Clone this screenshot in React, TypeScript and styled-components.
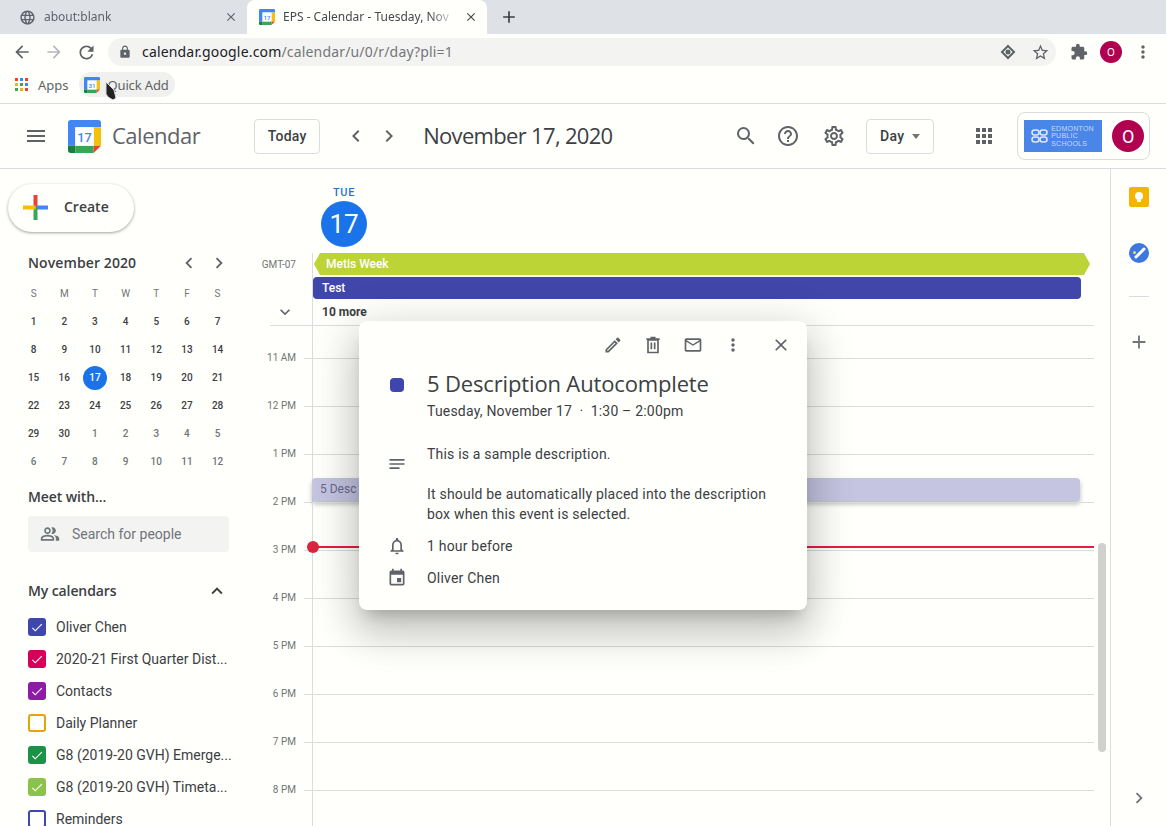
import React from 'react';
import styled, { createGlobalStyle } from 'styled-components';
import {
  MdAdd, MdApps, MdArrowBack, MdArrowForward, MdChevronLeft, MdChevronRight, MdClose, MdEvent, MdExpandLess,
  MdExpandMore, MdExtension, MdHelpOutline, MdLanguage, MdLock, MdMenu, MdMoreVert, MdNotes,
  MdOutlineEdit, MdOutlineMail, MdOutlineNotifications, MdOutlinePeopleAlt, MdOutlineSettings, MdRefresh,
  MdSearch, MdStarBorder, MdCheck,
} from 'react-icons/md';

const UI = '"Noto Sans", "Open Sans", sans-serif';
const BODY = 'Roboto, "Liberation Sans", sans-serif';
const BRAND = '"Open Sans", Roboto, sans-serif';

const GlobalStyle = createGlobalStyle`
  html, body { margin: 0; padding: 0; background: #fffffc; }
  * { box-sizing: border-box; }
`;

const Page = styled.div`
  position: relative;
  width: 1166px;
  height: 826px;
  overflow: hidden;
  display: flex;
  flex-direction: column;
  background: #fffffc;
  font-family: ${BODY};
  color: #3c4043;
`;

const TabStrip = styled.div`
  height: 34px;
  flex: none;
  display: flex;
  align-items: flex-end;
  padding-left: 7px;
  background: #dee1e6;
`;

const Tab = styled.div<{ $active?: boolean }>`
  width: 240px;
  height: 34px;
  display: flex;
  align-items: center;
  padding: 0 9px 0 12px;
  gap: 8px;
  border-radius: 8px 8px 0 0;
  background: ${(p) => (p.$active ? '#fffffc' : 'transparent')};
  color: ${(p) => (p.$active ? '#45484c' : '#5f6368')};
  font: 12px/16px ${UI};
`;

const TabTitle = styled.span`
  flex: 1;
  white-space: nowrap;
  overflow: hidden;
  -webkit-mask-image: linear-gradient(to right, #000 85%, transparent);
  mask-image: linear-gradient(to right, #000 85%, transparent);
`;

const NewTab = styled.div`
  display: flex;
  align-items: center;
  height: 34px;
  padding-left: 12px;
  color: #3c4043;
`;

const BrowserBar = styled.div`
  height: 36px;
  flex: none;
  display: flex;
  align-items: center;
  padding-left: 6px;
  background: #fffffc;
  color: #5f6368;
`;

const NavButton = styled.div<{ $muted?: boolean }>`
  width: 32px;
  height: 32px;
  flex: none;
  display: flex;
  align-items: center;
  justify-content: center;
  color: ${(p) => (p.$muted ? '#b6b8ba' : '#5f6368')};
`;

const Omnibox = styled.div`
  width: 948px;
  height: 28px;
  margin: 0 7px 0 6px;
  flex: none;
  display: flex;
  align-items: center;
  padding: 0 0 0 10px;
  border-radius: 14px;
  background: #f3f3f2;
  font: 14px/20px ${UI};
`;

const Url = styled.span`
  flex: 1;
  margin-left: 10px;
  color: #73767a;
  letter-spacing: 0.17px;
  b { font-weight: 400; color: #202124; }
`;

const ProfileDot = styled.div`
  width: 22px;
  height: 22px;
  border-radius: 50%;
  display: flex;
  align-items: center;
  justify-content: center;
  background: #b0004f;
  color: #fff;
  font: 10px ${UI};
`;

const Bookmarks = styled.div`
  height: 34px;
  flex: none;
  display: flex;
  align-items: center;
  padding: 0 0 4px 15px;
  border-bottom: 1px solid #dadce0;
  font: 13px/16px ${UI};
  color: #5f6368;
`;

const AppsLabel = styled.span`
  margin: 0 10px 0 10px;
`;

const QuickAdd = styled.div`
  width: 96px;
  height: 25px;
  display: flex;
  align-items: center;
  gap: 8px;
  padding-left: 5px;
  border-radius: 13px;
  background: #f0f0ee;
  letter-spacing: -0.15px;
`;

const AppHeader = styled.header`
  height: 65px;
  flex: none;
  display: flex;
  align-items: center;
  padding-left: 24px;
  border-bottom: 1px solid #dadce0;
  color: #5f6368;
`;

const Wordmark = styled.span`
  margin: -2px 54px 0 11px;
  font: 22px/28px ${BRAND};
  letter-spacing: -0.5px;
  color: #5f6368;
`;

const OutlineButton = styled.div<{ $width: number }>`
  width: ${(p) => p.$width}px;
  height: 35px;
  flex: none;
  display: flex;
  align-items: center;
  justify-content: center;
  gap: 8px;
  border: 1px solid #dadce0;
  border-radius: 4px;
  font: 500 14px/20px ${BODY};
  letter-spacing: 0.25px;
  color: #3c4043;
`;

const Caret = styled.i`
  width: 0;
  height: 0;
  border: 4.5px solid transparent;
  border-top: 5px solid #70757a;
  border-bottom: 0;
`;

const HeaderIcon = styled.div<{ $w?: number }>`
  width: ${(p) => p.$w ?? 33}px;
  height: 33px;
  flex: none;
  display: flex;
  align-items: center;
  justify-content: center;
  color: #5f6368;
`;

const DateTitle = styled.h1`
  width: 311px;
  margin: -3px 0 0 18px;
  font: 400 22px/28px ${BRAND};
  letter-spacing: -0.68px;
  color: #3c4043;
`;

const Account = styled.div`
  width: 133px;
  height: 48px;
  margin-left: 21px;
  flex: none;
  display: flex;
  align-items: center;
  padding-left: 6px;
  gap: 10px;
  border: 1px solid #dadce0;
  border-radius: 8px;
`;

const SchoolLogo = styled.div`
  width: 78px;
  height: 32px;
  display: flex;
  align-items: center;
  gap: 3px;
  padding-left: 7px;
  background: #4a86e8;
  color: #c6d9f8;
  font: 300 7px/7.5px "Liberation Sans", sans-serif;
  letter-spacing: 0.25px;
  text-transform: uppercase;
`;

const Avatar = styled.div`
  width: 32px;
  height: 32px;
  display: flex;
  align-items: center;
  justify-content: center;
  border-radius: 50%;
  background: #b0004f;
  color: #fff;
  font: 18px ${BODY};
`;

const Body = styled.main`
  flex: 1;
  min-height: 0;
  display: flex;
`;

const Sidebar = styled.aside`
  width: 256px;
  flex: none;
  display: flex;
  flex-direction: column;
`;

const CreateButton = styled.div`
  width: 126px;
  height: 48px;
  margin: 15px 0 0 8px;
  padding: 0 0 2px 15px;
  flex: none;
  display: flex;
  align-items: center;
  gap: 16px;
  border-radius: 24px;
  background: #fffffc;
  box-shadow: 0 1px 2px 0 rgba(60, 64, 67, 0.3), 0 1px 3px 1px rgba(60, 64, 67, 0.15);
  font: 600 14px/20px ${BRAND};
  color: #3c4043;
`;

const MiniHeader = styled.div`
  height: 28px;
  margin: 17px 22px 0 28px;
  flex: none;
  display: flex;
  align-items: center;
  color: #5f6368;
`;

const MiniTitle = styled.span`
  flex: 1;
  font: 600 14px/20px ${BRAND};
  letter-spacing: 0.1px;
  color: #3c4043;
`;

const MiniGrid = styled.div`
  margin: 3px 0 0 18.3px;
  flex: none;
  display: grid;
  grid-template-columns: repeat(7, 30.67px);
  grid-auto-rows: 28px;
`;

const MiniCell = styled.div<{ $tone: 'head' | 'day' | 'other' | 'today' }>`
  display: flex;
  align-items: center;
  justify-content: center;
  font: ${(p) => (p.$tone === 'head' ? 400 : 500)} 10px/16px ${BODY};
  color: ${(p) => ({ head: '#70757a', day: '#3c4043', other: '#70757a', today: '#fff' })[p.$tone]};
  span {
    width: 24px;
    height: 24px;
    display: flex;
    align-items: center;
    justify-content: center;
    border-radius: 50%;
    background: ${(p) => (p.$tone === 'today' ? '#1a73e8' : 'transparent')};
  }
`;

const SectionTitle = styled.div<{ $top: number }>`
  height: 20px;
  margin: ${(p) => p.$top}px 28px 0 28px;
  flex: none;
  display: flex;
  align-items: center;
  justify-content: space-between;
  font: 600 14px/20px ${BRAND};
  letter-spacing: -0.1px;
  color: #3c4043;
`;

const PeopleSearch = styled.div`
  width: 201px;
  height: 36px;
  margin: 9px 0 0 28px;
  flex: none;
  display: flex;
  align-items: center;
  gap: 12px;
  padding-left: 12px;
  border-radius: 4px;
  background: #f3f3f2;
  font: 14px/20px ${BODY};
  color: #70757a;
`;

const CalendarList = styled.ul`
  margin: 10px 0 0 28px;
  padding: 0;
  list-style: none;
`;

const CalendarRow = styled.li`
  height: 32px;
  width: 204px;
  display: flex;
  align-items: center;
  gap: 10px;
  font: 14px/20px ${BODY};
  color: #3c4043;
  white-space: nowrap;
`;

const Check = styled.span<{ $color: string; $on: boolean }>`
  width: 18px;
  height: 18px;
  flex: none;
  display: flex;
  align-items: center;
  justify-content: center;
  border: 2px solid ${(p) => p.$color};
  border-radius: 3px;
  background: ${(p) => (p.$on ? p.$color : 'transparent')};
  color: #fff;
`;

const Schedule = styled.section`
  flex: 1;
  min-width: 0;
  display: flex;
  flex-direction: column;
  position: relative;
`;

const DayHead = styled.div`
  width: 46px;
  height: 84px;
  margin-left: 65px;
  padding-top: 17px;
  flex: none;
  display: flex;
  flex-direction: column;
  align-items: center;
  gap: 1px;
  font: 500 11px/14px ${BODY};
  letter-spacing: 0.6px;
  color: #2a6fd6;
`;

const DayNumber = styled.div`
  width: 46px;
  height: 46px;
  display: flex;
  align-items: center;
  justify-content: center;
  border-radius: 50%;
  background: #1a73e8;
  color: #fff;
  letter-spacing: 0;
  font: 400 26px/46px ${BODY};
`;

const AllDay = styled.div`
  height: 73px;
  margin: 0 16px 0 14px;
  flex: none;
  display: flex;
  border-bottom: 1px solid #dadce0;
`;

const AllDayGutter = styled.div`
  width: 42px;
  flex: none;
  display: flex;
  flex-direction: column;
  justify-content: space-between;
  align-items: flex-end;
  padding: 5px 16px 3px 0;
  color: #5f6368;
  font: 10px/14px ${BODY};
  white-space: nowrap;
  svg { margin-right: 1px; }
`;

const GutterLabel = styled.span`
  color: #70757a;
`;

const AllDayEvents = styled.div`
  flex: 1;
  display: flex;
  flex-direction: column;
  gap: 2px;
  border-left: 1px solid #dadce0;
`;

const Banner = styled.div<{ $color: string; $width: number; $pointed?: boolean }>`
  width: ${(p) => p.$width}px;
  height: 22px;
  margin-left: ${(p) => (p.$pointed ? 1 : 0)}px;
  padding-left: ${(p) => (p.$pointed ? 12 : 9)}px;
  border-radius: ${(p) => (p.$pointed ? 0 : 4)}px;
  background: ${(p) => p.$color};
  clip-path: ${(p) =>
    p.$pointed
      ? 'polygon(0 50%, 6px 0, calc(100% - 6px) 0, 100% 50%, calc(100% - 6px) 100%, 6px 100%)'
      : 'none'};
  color: #fff;
  font: 500 12px/22px ${BODY};
`;

const MoreLink = styled.div`
  height: 22px;
  padding-left: 9px;
  font: 700 12px/22px ${BODY};
  color: #3c4043;
`;

const HourRow = styled.div<{ $height: number }>`
  height: ${(p) => p.$height}px;
  flex: none;
  display: flex;
`;

const HourLabel = styled.div`
  width: 40px;
  flex: none;
  margin-top: -7px;
  text-align: right;
  font: 10px/14px ${BODY};
  color: #70757a;
  white-space: nowrap;
`;

const Tick = styled.div<{ $line: boolean }>`
  width: 8px;
  margin-left: 8px;
  flex: none;
  border-top: ${(p) => (p.$line ? '1px solid #dadce0' : '0')};
`;

const HourCell = styled.div<{ $line: boolean }>`
  position: relative;
  flex: 1;
  margin-right: 16px;
  border-left: 1px solid #dadce0;
  border-top: ${(p) => (p.$line ? '1px solid #dadce0' : '0')};
`;

const GridEvent = styled.div`
  position: absolute;
  left: -1px;
  right: 14px;
  top: 23px;
  height: 23px;
  padding-left: 8px;
  border-radius: 4px;
  background: #c5c4e1;
  box-shadow: 0 3px 5px rgba(0, 0, 0, 0.28);
  color: #666a8c;
  font: 400 12px/23px ${BODY};
`;

const NowLine = styled.div`
  position: absolute;
  left: 0;
  right: 0;
  top: -5px;
  height: 2px;
  background: #d9263c;
  &::before {
    content: '';
    position: absolute;
    left: -6px;
    top: -5px;
    width: 12px;
    height: 12px;
    border-radius: 50%;
    background: #d9263c;
  }
`;

const ScrollThumb = styled.div`
  position: absolute;
  left: 842px;
  top: 374px;
  width: 8px;
  height: 209px;
  border-radius: 4px;
  background: #d0d0ce;
`;

const SidePanel = styled.aside`
  width: 56px;
  flex: none;
  display: flex;
  flex-direction: column;
  align-items: center;
  border-left: 1px solid #dadce0;
  color: #70757a;
`;

const PanelIcon = styled.div<{ $top: number }>`
  margin-top: ${(p) => p.$top}px;
  height: 20px;
  display: flex;
  align-items: center;
  justify-content: center;
`;

const PanelRule = styled.hr`
  width: 20px;
  margin: 33px 0 0;
  border: 0;
  border-top: 1px solid #dadce0;
`;

const Popup = styled.div`
  position: absolute;
  left: 359px;
  top: 321px;
  width: 448px;
  height: 289px;
  border-radius: 8px;
  background: #fffffc;
  box-shadow: 0 24px 38px 3px rgba(0, 0, 0, 0.14), 0 9px 46px 8px rgba(0, 0, 0, 0.12),
    0 11px 15px -7px rgba(0, 0, 0, 0.2);
`;

const PopupTools = styled.div`
  height: 48px;
  padding-right: 6px;
  display: flex;
  justify-content: flex-end;
  align-items: center;
  color: #5f6368;
`;

const ToolButton = styled.div<{ $gap?: boolean }>`
  width: 40px;
  height: 40px;
  margin-left: ${(p) => (p.$gap ? 8 : 0)}px;
  display: flex;
  align-items: center;
  justify-content: center;
`;

const PopupRow = styled.div<{ $top?: number }>`
  margin-top: ${(p) => p.$top ?? 0}px;
  display: grid;
  grid-template-columns: 68px 1fr;
  padding-right: 30px;
  font: 14px/20px ${BODY};
  letter-spacing: 0.2px;
  color: #3c4043;
`;

const RowIcon = styled.div<{ $top: number }>`
  padding: ${(p) => p.$top}px 0 0 28px;
  color: #5f6368;
  svg { display: block; }
`;

const Swatch = styled.div`
  width: 14px;
  height: 14px;
  margin: 8px 0 0 31px;
  border-radius: 4px;
  background: #3f46ad;
`;

const EventTitle = styled.div`
  margin-top: -1px;
  font: 400 22px/28px ${BRAND};
  letter-spacing: -0.15px;
`;

const EventWhen = styled.div`
  margin-top: 4px;
`;

const Paragraph = styled.p`
  margin: 0 0 20px;
  &:last-child { margin: 0; }
`;

const PointerMark = styled.svg`
  position: absolute;
  left: 104px;
  top: 80px;
`;

function CalendarLogo({ size, day }: { size: number; day: string }) {
  return (
    <svg width={size} height={size} viewBox="0 0 36 36">
      <path d="M3 0h30a3 3 0 0 1 3 3v5H8v20H0V3a3 3 0 0 1 3-3z" fill="#4285f4" />
      <rect x="28" y="8" width="8" height="20" fill="#f4c20d" />
      <path d="M8 28h20v8H8z" fill="#34a853" />
      <path d="M0 28h8v8H3a3 3 0 0 1-3-3z" fill="#188038" />
      <path d="M28 28h8l-8 8z" fill="#ea4335" />
      <rect x="8" y="8" width="20" height="20" fill="#fff" />
      <text x="18" y="24" textAnchor="middle" fontFamily="Roboto, sans-serif" fontSize="14" fontWeight="500" fill="#4285f4">
        {day}
      </text>
    </svg>
  );
}

function GoogleGrid() {
  const colors = ['#ea4335', '#4285f4', '#ea4335', '#f4b400', '#34a853', '#4285f4', '#34a853', '#f4b400', '#ea4335'];
  return (
    <svg width="13" height="13" viewBox="0 0 13 13">
      {colors.map((c, i) => (
        <rect key={i} x={(i % 3) * 5} y={Math.floor(i / 3) * 5} width="3" height="3" fill={c} />
      ))}
    </svg>
  );
}

const miniDays = [
  ...Array.from({ length: 30 }, (_, i) => i + 1),
  ...Array.from({ length: 12 }, (_, i) => i + 1),
];

const calendars = [
  { name: 'Oliver Chen', color: '#3f46ad', on: true },
  { name: '2020-21 First Quarter Dist...', color: '#d50057', on: true },
  { name: 'Contacts', color: '#8e1ba8', on: true },
  { name: 'Daily Planner', color: '#e4a30f', on: false },
  { name: 'G8 (2019-20 GVH) Emerge...', color: '#1a9347', on: true },
  { name: 'G8 (2019-20 GVH) Timeta...', color: '#8bc34a', on: true },
  { name: 'Reminders', color: '#3f46ad', on: false },
];

const hours = ['', '11 AM', '12 PM', '1 PM', '2 PM', '3 PM', '4 PM', '5 PM', '6 PM', '7 PM', '8 PM'];

export default function App() {
  return (
    <Page>
      <GlobalStyle />
      <TabStrip>
        <Tab>
          <MdLanguage size={17} />
          <TabTitle>about:blank</TabTitle>
          <MdClose size={14} />
        </Tab>
        <Tab $active>
          <CalendarLogo size={16} day="17" />
          <TabTitle>EPS - Calendar - Tuesday, Nov</TabTitle>
          <MdClose size={14} />
        </Tab>
        <NewTab>
          <MdAdd size={20} />
        </NewTab>
      </TabStrip>

      <BrowserBar>
        <NavButton>
          <MdArrowBack size={20} />
        </NavButton>
        <NavButton $muted>
          <MdArrowForward size={20} />
        </NavButton>
        <NavButton>
          <MdRefresh size={21} />
        </NavButton>
        <Omnibox>
          <MdLock size={14} />
          <Url>
            <b>calendar.google.com</b>/calendar/u/0/r/day?pli=1
          </Url>
          <NavButton>
            <svg width="16" height="16" viewBox="0 0 16 16">
              <path d="M8 2l6 6-6 6-6-6z" fill="none" stroke="#5f6368" strokeWidth="2" />
              <circle cx="8" cy="8" r="2.5" fill="#5f6368" />
            </svg>
          </NavButton>
          <NavButton>
            <MdStarBorder size={19} />
          </NavButton>
        </Omnibox>
        <NavButton>
          <MdExtension size={18} />
        </NavButton>
        <NavButton>
          <ProfileDot>O</ProfileDot>
        </NavButton>
        <NavButton>
          <MdMoreVert size={20} />
        </NavButton>
      </BrowserBar>

      <Bookmarks>
        <GoogleGrid />
        <AppsLabel>Apps</AppsLabel>
        <QuickAdd>
          <CalendarLogo size={16} day="31" />
          Quick Add
        </QuickAdd>
      </Bookmarks>

      <AppHeader>
        <MdMenu size={24} />
        <HeaderIcon $w={20} />
        <CalendarLogo size={33} day="17" />
        <Wordmark>Calendar</Wordmark>
        <OutlineButton $width={66}>Today</OutlineButton>
        <HeaderIcon $w={19} />
        <HeaderIcon>
          <MdChevronLeft size={24} />
        </HeaderIcon>
        <HeaderIcon>
          <MdChevronRight size={24} />
        </HeaderIcon>
        <DateTitle>November 17, 2020</DateTitle>
        <HeaderIcon $w={24}>
          <MdSearch size={24} />
        </HeaderIcon>
        <HeaderIcon $w={18} />
        <HeaderIcon $w={24}>
          <MdHelpOutline size={24} />
        </HeaderIcon>
        <HeaderIcon $w={22} />
        <HeaderIcon $w={24}>
          <MdOutlineSettings size={24} />
        </HeaderIcon>
        <HeaderIcon $w={20} />
        <OutlineButton $width={68}>
          Day <Caret />
        </OutlineButton>
        <HeaderIcon $w={38} />
        <HeaderIcon $w={24}>
          <MdApps size={24} />
        </HeaderIcon>
        <Account>
          <SchoolLogo>
            <svg width="17" height="14" viewBox="0 0 17 14">
              <g fill="none" stroke="#dfe9fb" strokeWidth="1.5">
                <rect x="1" y="1" width="7" height="5" rx="2.5" />
                <rect x="9" y="1" width="7" height="5" rx="2.5" />
                <rect x="1" y="8" width="7" height="5" rx="2.5" />
                <rect x="9" y="8" width="7" height="5" rx="2.5" />
              </g>
            </svg>
            <span>
              Edmonton
              <br />
              Public
              <br />
              Schools
            </span>
          </SchoolLogo>
          <Avatar>O</Avatar>
        </Account>
      </AppHeader>

      <Body>
        <Sidebar>
          <CreateButton>
            <svg width="25" height="25" viewBox="0 0 25 25">
              <rect x="10.5" y="0" width="4" height="12.5" fill="#ea4335" />
              <rect x="12.5" y="10.5" width="12.5" height="4" fill="#4285f4" />
              <rect x="10.5" y="12.5" width="4" height="12.5" fill="#34a853" />
              <rect x="0" y="10.5" width="12.5" height="4" fill="#fbbc04" />
            </svg>
            Create
          </CreateButton>

          <MiniHeader>
            <MiniTitle>November 2020</MiniTitle>
            <HeaderIcon $w={30}>
              <MdChevronLeft size={22} />
            </HeaderIcon>
            <HeaderIcon $w={30}>
              <MdChevronRight size={22} />
            </HeaderIcon>
          </MiniHeader>
          <MiniGrid>
            {['S', 'M', 'T', 'W', 'T', 'F', 'S'].map((d, i) => (
              <MiniCell key={i} $tone="head">
                <span>{d}</span>
              </MiniCell>
            ))}
            {miniDays.map((d, i) => (
              <MiniCell key={i} $tone={i === 16 ? 'today' : i < 30 ? 'day' : 'other'}>
                <span>{d}</span>
              </MiniCell>
            ))}
          </MiniGrid>

          <SectionTitle $top={11}>Meet with...</SectionTitle>
          <PeopleSearch>
            <MdOutlinePeopleAlt size={20} color="#70757a" />
            Search for people
          </PeopleSearch>

          <SectionTitle $top={29}>
            My calendars
            <MdExpandLess size={22} color="#3c4043" />
          </SectionTitle>
          <CalendarList>
            {calendars.map((c) => (
              <CalendarRow key={c.name}>
                <Check $color={c.color} $on={c.on}>
                  {c.on && <MdCheck size={15} />}
                </Check>
                {c.name}
              </CalendarRow>
            ))}
          </CalendarList>
        </Sidebar>

        <Schedule>
          <DayHead>
            TUE
            <DayNumber>17</DayNumber>
          </DayHead>
          <AllDay>
            <AllDayGutter>
              <GutterLabel>GMT-07</GutterLabel>
              <MdExpandMore size={20} />
            </AllDayGutter>
            <AllDayEvents>
              <Banner $color="#bcd435" $width={776} $pointed>
                Metis Week
              </Banner>
              <Banner $color="#4146ab" $width={768}>
                Test
              </Banner>
              <MoreLink>10 more</MoreLink>
            </AllDayEvents>
          </AllDay>
          {hours.map((h, i) => (
            <HourRow key={i} $height={i === 0 ? 32 : 48}>
              <HourLabel>{h}</HourLabel>
              <Tick $line={i > 0} />
              <HourCell $line={i > 0}>
                {h === '1 PM' && <GridEvent>5 Desc</GridEvent>}
                {h === '3 PM' && <NowLine />}
              </HourCell>
            </HourRow>
          ))}
          <ScrollThumb />
        </Schedule>

        <SidePanel>
          <PanelIcon $top={18}>
            <svg width="20" height="20" viewBox="0 0 20 20">
              <rect width="20" height="20" rx="2" fill="#f4b400" />
              <circle cx="10" cy="9" r="4" fill="#fff" />
              <rect x="8" y="13" width="4" height="2" fill="#fff" />
            </svg>
          </PanelIcon>
          <PanelIcon $top={36}>
            <svg width="20" height="20" viewBox="0 0 20 20">
              <circle cx="10" cy="10" r="10" fill="#3d78e0" />
              <path d="M7 14l8-8" stroke="#fff" strokeWidth="3" strokeLinecap="round" />
              <circle cx="5.5" cy="9.5" r="1.5" fill="#fbd75b" />
            </svg>
          </PanelIcon>
          <PanelRule />
          <PanelIcon $top={35}>
            <MdAdd size={22} />
          </PanelIcon>
          <PanelIcon $top={436}>
            <MdChevronRight size={22} />
          </PanelIcon>
        </SidePanel>
      </Body>

      <Popup>
        <PopupTools>
          <ToolButton>
            <MdOutlineEdit size={20} />
          </ToolButton>
          <ToolButton>
            <svg width="20" height="20" viewBox="0 0 24 24" fill="none" stroke="currentColor" strokeWidth="2">
              <path d="M6 6h12v15H6z" />
              <path d="M4 5h16M9 3h6M10 9v8M14 9v8" />
            </svg>
          </ToolButton>
          <ToolButton>
            <MdOutlineMail size={20} />
          </ToolButton>
          <ToolButton>
            <MdMoreVert size={20} />
          </ToolButton>
          <ToolButton $gap>
            <MdClose size={20} />
          </ToolButton>
        </PopupTools>
        <PopupRow $top={1}>
          <Swatch />
          <div>
            <EventTitle>5 Description Autocomplete</EventTitle>
            <EventWhen>Tuesday, November 17 &nbsp;·&nbsp; 1:30 – 2:00pm</EventWhen>
          </div>
        </PopupRow>
        <PopupRow $top={23}>
          <RowIcon $top={10}>
            <MdNotes size={20} />
          </RowIcon>
          <div>
            <Paragraph>This is a sample description.</Paragraph>
            <Paragraph>It should be automatically placed into the description box when this event is selected.</Paragraph>
          </div>
        </PopupRow>
        <PopupRow $top={12}>
          <RowIcon $top={0}>
            <MdOutlineNotifications size={20} />
          </RowIcon>
          <div>1 hour before</div>
        </PopupRow>
        <PopupRow $top={12}>
          <RowIcon $top={0}>
            <MdEvent size={20} />
          </RowIcon>
          <div>Oliver Chen</div>
        </PopupRow>
      </Popup>

      <PointerMark width="14" height="22" viewBox="0 0 14 22">
        <path d="M2 2l0 12 2 3 5 3 3-2-2-8z" fill="#222" stroke="#ddd" strokeWidth="1" />
      </PointerMark>
    </Page>
  );
}
